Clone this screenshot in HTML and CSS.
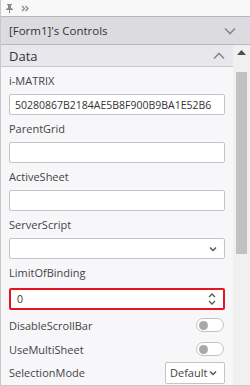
FILE: index.html
```html
<!DOCTYPE html>
<html>
<head>
<meta charset="utf-8">
<link rel="stylesheet" href="styles.css">
</head>
<body>
<div class="panel">
  <div class="topbar">
    <svg class="pin" width="9" height="9" viewBox="0 0 9 9"><path d="M2 0h5v1H6v3l2 1v1H5v3H4V6H1V5l2-1V1H2z" fill="#8a8a8a"/></svg>
    <svg class="dbl" width="8" height="7" viewBox="0 0 8 7"><path d="M1 1l2.5 2.5L1 6M4.5 1L7 3.5 4.5 6" fill="none" stroke="#8a8a8a" stroke-width="1.3"/></svg>
  </div>
  <div class="head">
    <span>[Form1]'s Controls</span>
    <svg width="12" height="8" viewBox="0 0 12 8"><path d="M1 1.5l5 5 5-5" fill="none" stroke="#888" stroke-width="1.6"/></svg>
  </div>
  <div class="body">
    <div class="main">
      <div class="sec">
        <span>Data</span>
        <svg width="12" height="8" viewBox="0 0 12 8"><path d="M1 6.5l5-5 5 5" fill="none" stroke="#888" stroke-width="1.6"/></svg>
      </div>
      <div class="props">
        <div class="label">i-MATRIX</div>
        <div class="input">50280867B2184AE5B8F900B9BA1E52B6</div>
        <div class="label">ParentGrid</div>
        <div class="input"></div>
        <div class="label">ActiveSheet</div>
        <div class="input"></div>
        <div class="label">ServerScript</div>
        <div class="input sel">
          <svg width="8" height="6" viewBox="0 0 8 6"><path d="M1 1.5l3 3 3-3" fill="none" stroke="#555" stroke-width="1.5"/></svg>
        </div>
        <div class="label">LimitOfBinding</div>
        <div class="input focus">
          <span>0</span>
          <svg width="8" height="14" viewBox="0 0 8 14"><path d="M1 5l3-3 3 3M1 9l3 3 3-3" fill="none" stroke="#555" stroke-width="1.3"/></svg>
        </div>
        <div class="row r1"><span>DisableScrollBar</span><div class="toggle"><i></i></div></div>
        <div class="row r2"><span>UseMultiSheet</span><div class="toggle"><i></i></div></div>
        <div class="row r3"><span>SelectionMode</span><div class="mini"><span>Default</span><svg width="8" height="6" viewBox="0 0 8 6"><path d="M1 1.5l3 3 3-3" fill="none" stroke="#555" stroke-width="1.5"/></svg></div></div>
      </div>
    </div>
    <div class="scroll">
      <svg class="up" width="9" height="5" viewBox="0 0 9 5"><path d="M0 5L4.5 0L9 5z" fill="#505050"/></svg>
      <div class="thumb"></div>
    </div>
  </div>
</div>
</body>
</html>
```
FILE: styles.css
```css
* { box-sizing: border-box; }
html, body { margin: 0; padding: 0; }
body { width: 250px; height: 386px; overflow: hidden; font-family: "Open Sans", "Noto Sans", sans-serif; color: #333; background: #f7f7f9; }
.panel { width: 250px; height: 386px; display: flex; flex-direction: column; border-left: 1px solid #c8c8c8; border-bottom: 1px solid #c8c8c8; }
.topbar { height: 17px; flex-shrink: 0; background: #f8f8f9; border-bottom: 1px solid #b8b8b8; display: flex; align-items: center; padding-left: 4px; gap: 7px; }
.head { height: 28px; flex-shrink: 0; background: #dcdce0; border-bottom: 1px solid #b8b8b8; display: flex; align-items: center; justify-content: space-between; padding: 0 14px 0 8px; font-size: 11.5px; color: #333; }
.body { flex: 1; display: flex; min-height: 0; }
.main { flex: 1; min-width: 0; display: flex; flex-direction: column; }
.sec { height: 24px; background: #e8e8ec; border-bottom: 1px solid #c8c8c8; display: flex; align-items: center; justify-content: space-between; padding: 0 8px 0 8px; font-size: 13px; color: #333; }
.props { padding: 0 8px 0 8px; display: flex; flex-direction: column; }
.label { font-size: 11px; height: 27px; line-height: 28px; color: #444; }
.input { height: 21px; background: #fff; border: 1px solid #c4c4c4; border-radius: 2px; font-size: 10.5px; padding: 0 5px; display: flex; align-items: center; justify-content: space-between; color: #333; }
.sel { justify-content: flex-end; padding-right: 7px; }
.focus { border: 2px solid #e6141e; padding: 0 7px 0 6px; height: 22px; margin-top: 2px; }
.row { display: flex; justify-content: space-between; align-items: center; font-size: 11px; color: #444; }
.r1 { height: 28px; padding-top: 2px; }
.r2 { height: 22px; }
.r3 { height: 25px; }
.toggle { width: 28px; height: 14px; border: 1px solid #c4c4c4; border-radius: 7px; background: #fff; position: relative; margin-right: 1px; }
.toggle i { position: absolute; left: 2px; top: 1.5px; width: 9px; height: 9px; border-radius: 50%; background: #a8a8a8; }
.mini { width: 60px; height: 22px; border: 1px solid #c4c4c4; border-radius: 2px; background: #fff; font-size: 11px; display: flex; align-items: center; justify-content: space-between; padding: 0 7px 0 4px; }
.scroll { width: 17px; flex-shrink: 0; background: #f0f0f0; display: flex; flex-direction: column; align-items: center; padding-top: 5px; }
.up { margin-bottom: 17px; }
.thumb { width: 11px; height: 182px; background: #c1c1c1; }
```
